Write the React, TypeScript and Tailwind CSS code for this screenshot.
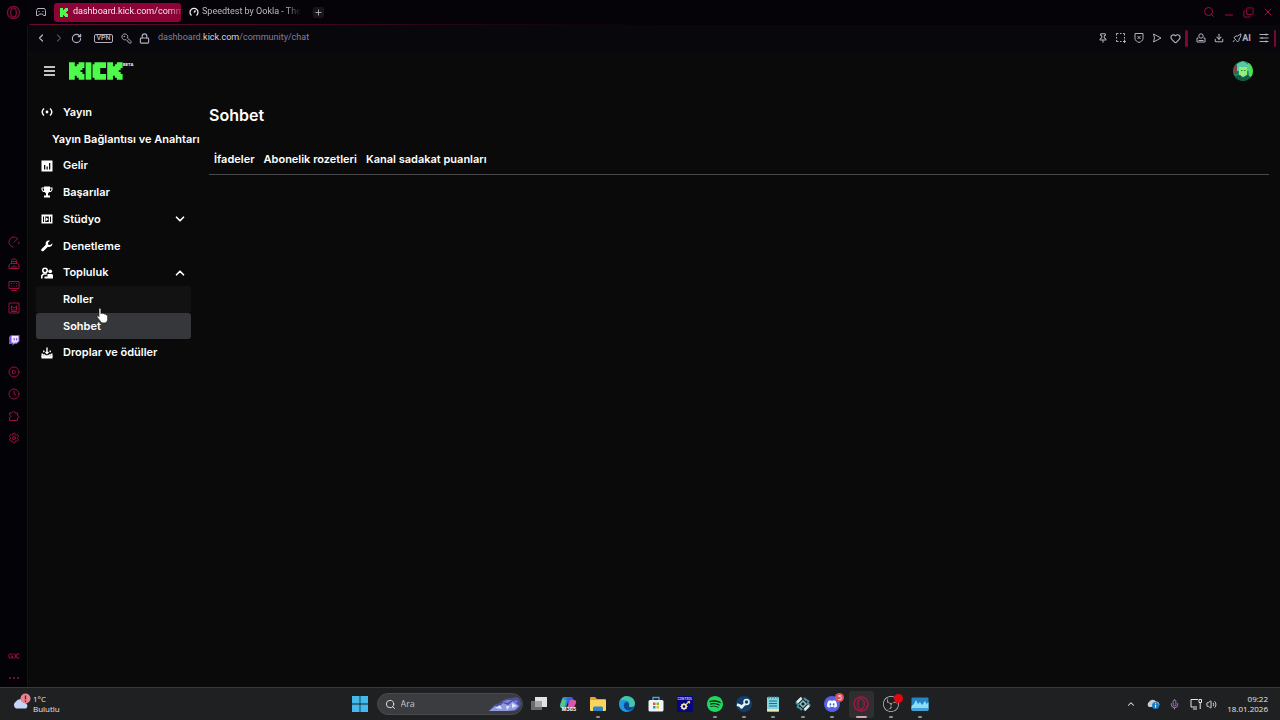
import React from "react";
import {
  ChevronDown,
  ChevronLeft,
  ChevronRight,
  ChevronUp,
  CirclePlay,
  Clock,
  Copy,
  Download,
  Heart,
  KeyRound,
  Lock,
  Mic,
  Minus,
  Pin,
  Plus,
  RotateCw,
  Search,
  Settings,
  Volume2,
  X,
} from "lucide-react";
import { SiDiscord, SiObsstudio, SiSpotify } from "react-icons/si";

interface NavItem {
  label: string;
  icon?: React.ReactNode;
  arrow?: "up" | "down";
  className?: string;
}

const K_SHAPE = "h3v2h1v-1h1v-1h3v3h-1v1h-1v1h1v1h1v3h-3v-1h-1v-1h-1v2h-3z";

function KickMark() {
  return (
    <svg viewBox="0 0 8 9" className="h-[9px] w-2 shrink-0 fill-[#4dfb4a]">
      <path d={"M0 0" + K_SHAPE} />
    </svg>
  );
}

function KickLogo() {
  return (
    <svg viewBox="0 0 28 9" className="h-[18px] w-[54px] fill-[#4dfb4a]">
      <path d={"M0 0" + K_SHAPE} />
      <rect x="8.6" width="3" height="9" />
      <path d="M13.200 0h6v3h-3v3h3v3h-6v-1h-1v-7h1z" />
      <path d={"M19.800 0" + K_SHAPE} />
    </svg>
  );
}

function LiveIcon() {
  return (
    <svg viewBox="0 0 12 12" className="size-3" fill="none" stroke="currentColor" strokeWidth="1.5">
      <path d="M3 2.5C.6 4.5.6 7.5 3 9.5M9 2.5c2.4 2 2.4 5 0 7" />
      <circle cx="6" cy="6" r="1.4" fill="currentColor" stroke="none" />
    </svg>
  );
}

function IncomeIcon() {
  return (
    <svg viewBox="0 0 12 12" className="size-3">
      <path
        fill="currentColor"
        fillRule="evenodd"
        d="M.5.5h11v11H.5zM3 5v4.5h1.300V5zM5.500 6.500v3h1.300v-3zM8 3v6.500h1.300V3z"
      />
    </svg>
  );
}

function TrophyIcon() {
  return (
    <svg viewBox="0 0 12 12" className="size-3 fill-current">
      <path
        fillRule="evenodd"
        d="M3 .5h6v1h2.500v2.500L10 6H8.500L7 7.300V9.500h2v2H3v-2h2V7.300L3.500 6H2L.5 4V1.500H3zM1.600 2.500v1.200l.9 1.200H3V2.500zM9 2.500v2.400h.5l.9-1.200V2.500z"
      />
    </svg>
  );
}

function StudioIcon() {
  return (
    <svg viewBox="0 0 12 12" className="size-3 fill-current">
      <path fillRule="evenodd" d="M.5 1.500h11v9H.5zM2 3.500V9h1V3.500zM9 3.500V9h1V3.500zM4.200 3.500V9h3.600V3.500z" />
      <path d="M4.700 4.200 7.500 6.200 4.700 8.300z" />
    </svg>
  );
}

function WrenchIcon() {
  return (
    <svg viewBox="0 0 12 12" className="size-3 fill-current">
      <path d="M11.300 3.200 9.300 5 7.200 4.700 7 2.700 8.900.8C7.300.2 5.600.8 4.900 2.200c-.4.9-.4 1.700-.1 2.500L.6 8.900c-.6.6-.6 1.500 0 2 .6.6 1.500.6 2 0L6.900 6.700c1 .4 2.200.3 3.100-.4 1.100-.7 1.600-2 1.300-3.100z" />
    </svg>
  );
}

function CommunityIcon() {
  return (
    <svg viewBox="0 0 12 12" className="size-3">
      <circle cx="4" cy="3.500" r="2.200" fill="none" stroke="currentColor" strokeWidth="1.600" />
      <path d="M.8 11.500V8.800L2.500 7h3.200" fill="none" stroke="currentColor" strokeWidth="1.600" />
      <circle cx="9.200" cy="4.300" r="1.900" fill="currentColor" />
      <path d="M6.500 7H11l1 1v3.500H6.500zM3.500 9.500h3v2h-3z" fill="currentColor" />
    </svg>
  );
}

function DropsIcon() {
  return (
    <svg viewBox="0 0 12 12" className="size-3" fill="none" stroke="currentColor">
      <path strokeWidth="2.400" d="M.5 10.300h11" />
      <path strokeWidth="1.400" d="M1.200 6.500V10M10.800 6.500V10M6 .5v5.500M1 8h2.500l1 1h3l1-1H11M2.800 3.500v1.700M9.200 3.500v1.700M4.500 5 6 6.500 7.500 5" />
    </svg>
  );
}

function NavRow({ label, icon, arrow, className = "pl-[5px]" }: NavItem) {
  return (
    <a
      href="#"
      className={
        "flex items-center rounded-[3px] pr-1 text-[11px] font-semibold whitespace-nowrap text-white " + className
      }
    >
      {icon && <span className="mr-[10px] w-3 shrink-0">{icon}</span>}
      <span>{label}</span>
      {arrow === "down" && <ChevronDown className="ml-auto size-[14px]" strokeWidth={3} />}
      {arrow === "up" && <ChevronUp className="ml-auto size-[14px]" strokeWidth={3} />}
    </a>
  );
}

const navItems: NavItem[] = [
  { label: "Yayın", icon: <LiveIcon /> },
  { label: "Yayın Bağlantısı ve Anahtarı", className: "pl-4" },
  { label: "Gelir", icon: <IncomeIcon /> },
  { label: "Başarılar", icon: <TrophyIcon /> },
  { label: "Stüdyo", icon: <StudioIcon />, arrow: "down" },
  { label: "Denetleme", icon: <WrenchIcon /> },
  { label: "Topluluk", icon: <CommunityIcon />, arrow: "up" },
  { label: "Roller", className: "pl-[27px] bg-[#121213]" },
  { label: "Sohbet", className: "pl-[27px] bg-[#36373a]" },
  { label: "Droplar ve ödüller", icon: <DropsIcon /> },
];

function HandCursor() {
  return (
    <svg viewBox="0 0 12 16" className="pointer-events-none absolute left-[68px] top-[217px] h-4 w-3">
      <path
        d="M3 1.200c0-1.300 1.900-1.300 1.900 0v4.500l.3-.1c.3-.8 1.500-.7 1.700.2.500-.6 1.500-.4 1.600.4.600-.4 1.600-.1 1.600.9 1-.2 1.500.4 1.500 1.200v3.200c0 2.300-1.400 3.500-3.600 3.500-2.300 0-3.200-.8-4.200-2.500L1.200 9.200c-.6-1 .6-1.900 1.300-1.100l.5.600z"
        fill="#fff"
        stroke="#111"
        strokeWidth=".6"
      />
    </svg>
  );
}

function RailButton({ label, children }: { label: string; children: React.ReactNode }) {
  return (
    <button aria-label={label} className="flex size-3 items-center justify-center">
      {children}
    </button>
  );
}

function SideRail() {
  return (
    <div className="flex w-[27px] shrink-0 flex-col items-center justify-between bg-[#030206] text-[#9c103b]">
      <div className="h-[30px] pt-[5px]">
        <button aria-label="Opera" className="block">
          <svg viewBox="0 0 16 16" className="size-[15px]" fill="none" stroke="#7d0c30">
            <circle cx="8" cy="8" r="6.500" strokeWidth="1.500" />
            <ellipse cx="8" cy="8" rx="3" ry="4.800" strokeWidth="1.500" />
          </svg>
        </button>
      </div>
      <div className="flex flex-col gap-[10px]">
        <RailButton label="GX Control">
          <svg viewBox="0 0 12 12" className="size-3" fill="none" stroke="currentColor">
            <path d="M5.500 11A5 5 0 1 1 9.500 2.500M11 5.500A5 5 0 0 1 10.500 8.200M5.500 6.500 10 2.500" />
          </svg>
        </RailButton>
        <RailButton label="GX Cleaner">
          <svg viewBox="0 0 12 12" className="size-3" fill="none" stroke="currentColor">
            <path d="M3.500 5.500v-3l1-1.500h3l1 1.500v3M1 10.500V7l1.500-1.500h7L11 7v3.500zM4 10V8M6 10V7M8 10V8M4 3.500h4" />
          </svg>
        </RailButton>
        <RailButton label="GX Mods">
          <svg viewBox="0 0 12 12" className="size-3" fill="none" stroke="currentColor">
            <path d="M1 1.500h10v7H1zM3 10.500h6M3 3.500h1M5.500 3.500h1M8 3.500h1M3 6h1M5.500 6h1M8 6h1" />
          </svg>
        </RailButton>
        <RailButton label="GX Corner">
          <svg viewBox="0 0 12 12" className="size-3" fill="none" stroke="currentColor">
            <path d="M1 1h10v10H1zM3.500 8V4L6 6l2.500-2v4zM3 9.500h6" />
          </svg>
        </RailButton>
        <div className="my-[10px]">
          <RailButton label="Twitch">
            <svg viewBox="0 0 12 12" className="size-3">
              <path d="M1 3 3 1h8.500v6.500L8.500 10H6.500l-2 2v-2H1z" fill="#7a50d8" />
              <path d="M3.500 2h7v5L9 8.500H7L5.500 10V8.500h-2z" fill="#efe9ff" />
              <path d="M6.200 4v2.500M8.700 4v2.500" stroke="#6b45c6" />
            </svg>
          </RailButton>
        </div>
        <RailButton label="Player">
          <CirclePlay className="size-3" />
        </RailButton>
        <RailButton label="Geçmiş">
          <Clock className="size-3" />
        </RailButton>
        <RailButton label="Uzantılar">
          <svg viewBox="0 0 12 12" className="size-3" fill="none" stroke="currentColor">
            <path d="M1.500 10.500V7.500C3.500 7.500 3.500 5 1.500 5V3h2.500C4 .8 7 .8 7 3h2.500v2.500C11.500 5.500 11.500 8 9.500 8v2.500z" />
          </svg>
        </RailButton>
        <RailButton label="Ayarlar">
          <Settings className="size-3" />
        </RailButton>
      </div>
      <div className="flex flex-col items-center gap-[10px] pb-[3px]">
        <RailButton label="GX">
          <svg viewBox="0 0 12 12" className="size-3" fill="none" stroke="currentColor">
            <path d="M4.500 4h-3L1 4.500v3l.5.500h3V6H3M5.500 4h1.500L9 8h2.500M5.500 8H7l2-4h2.500" />
          </svg>
        </RailButton>
        <RailButton label="Daha fazla">
          <svg viewBox="0 0 12 12" className="size-3 fill-current">
            <circle cx="2" cy="6" r="1" />
            <circle cx="6" cy="6" r="1" />
            <circle cx="10" cy="6" r="1" />
          </svg>
        </RailButton>
      </div>
    </div>
  );
}

function TabStrip() {
  return (
    <div className="flex h-6 items-center bg-[#050308] pl-2 font-[Roboto,sans-serif] text-[9px]">
      <button aria-label="Çalışma alanı" className="text-[#b5b1bf]">
        <svg viewBox="0 0 12 12" className="size-3" fill="none" stroke="currentColor">
          <path d="M1.500 9.500v-5l1-2h7l1 2v5h-2l-1-1.500h-3l-1 1.500zM3.500 5.500h1M7.500 5.500h1" />
        </svg>
      </button>
      <div className="ml-[7px] flex h-[19px] w-[127px] items-center rounded-[3px] bg-[#8c0338] pl-[6px] text-[#f6e6ec]">
        <KickMark />
        <span className="ml-[5px] whitespace-nowrap mask-r-from-85%">dashboard.kick.com/comm</span>
      </div>
      <div className="ml-2 flex h-[19px] w-[116px] items-center text-[#bdb9c5]">
        <svg viewBox="0 0 10 10" className="size-[10px] shrink-0" fill="none" stroke="#e8e8ee" strokeWidth="1.300">
          <path d="M2.500 8.500A4 4 0 1 1 7.500 8.500M5 5.500l1.500-2" />
        </svg>
        <span className="ml-[3px] whitespace-nowrap mask-r-from-85%">Speedtest by Ookla - The</span>
      </div>
      <button aria-label="Yeni sekme" className="ml-2 rounded-[2px] bg-[#17151c] p-px text-[#c9c6d2]">
        <Plus className="size-[9px]" />
      </button>
      <div className="ml-auto flex items-center gap-2 pr-[6px] text-[#a20f3d]">
        <button aria-label="Sekmelerde ara">
          <Search className="size-3" />
        </button>
        <button aria-label="Küçült">
          <Minus className="mt-[6px] size-3" />
        </button>
        <button aria-label="Geri yükle">
          <Copy className="size-[11px] -scale-y-100" />
        </button>
        <button aria-label="Kapat">
          <X className="size-3" />
        </button>
      </div>
    </div>
  );
}

function AddressBar() {
  return (
    <div className="flex h-[26px] items-center bg-[#08070c] pl-[7px] font-[Roboto,sans-serif] text-[#b3afbe]">
      <button aria-label="Geri">
        <ChevronLeft className="size-3" strokeWidth={2.5} />
      </button>
      <button aria-label="İleri" className="ml-[6px] text-[#4b4854]">
        <ChevronRight className="size-3" strokeWidth={2.5} />
      </button>
      <button aria-label="Yenile" className="ml-[6px]">
        <RotateCw className="size-[11px]" strokeWidth={2.5} />
      </button>
      <button className="ml-3 h-[9px] w-[19px] rounded-[2px] border border-current text-center text-[7px] leading-[7px] font-semibold">
        VPN
      </button>
      <button aria-label="Site ayarları" className="ml-2">
        <KeyRound className="size-[11px] -scale-x-100" />
      </button>
      <button aria-label="Güvenli bağlantı" className="ml-[7px]">
        <Lock className="size-[11px]" strokeWidth={2.5} />
      </button>
      <a href="#" className="ml-2 text-[9px] text-[#8480a0]">
        dashboard.<span className="text-[#d6d3e0]">kick.com</span>/community/chat
      </a>
      <div className="ml-auto flex items-center gap-2">
        <button aria-label="Sabitle">
          <Pin className="size-[10px]" strokeWidth={2.5} />
        </button>
        <button aria-label="Ekran görüntüsü">
          <svg viewBox="0 0 10 10" className="size-[10px]" fill="none" stroke="currentColor">
            <path d="M.5 2.500v-2h2M4 .5h1.500M7 .5h1.500v2M8.500 4v1.500M.5 4v1.500M.5 7v1.500h2M4 8.500h1.500M8.500 6.500V10M7 8.500h3" />
          </svg>
        </button>
        <button aria-label="Reklam engelleyici">
          <svg viewBox="0 0 10 10" className="size-[10px]" fill="none" stroke="currentColor">
            <path d="M1 .5h8v5c0 2-2 3.200-4 4-2-.8-4-2-4-4zM3.500 3l3 3M6.500 3l-3 3" />
          </svg>
        </button>
        <button aria-label="Gönder">
          <svg viewBox="0 0 10 10" className="size-[10px]" fill="none" stroke="currentColor">
            <path d="M1.500 1 9 5 1.500 9l1-4z" />
          </svg>
        </button>
        <button aria-label="Favoriler">
          <Heart className="size-[11px]" strokeWidth={2.5} />
        </button>
      </div>
      <div className="ml-1 h-[17px] w-[3px] rounded-full bg-[#7a0832]" />
      <div className="ml-2 flex items-center gap-2">
        <button aria-label="Profil">
          <svg viewBox="0 0 10 10" className="size-[10px]" fill="none" stroke="currentColor">
            <circle cx="5" cy="3" r="2.200" />
            <path d="M2.500 5H1v4h8V5H7.500M2.500 7.500h5" />
          </svg>
        </button>
        <button aria-label="İndirilenler">
          <Download className="size-[10px]" strokeWidth={2.5} />
        </button>
        <button className="flex items-center text-[9px] leading-none font-bold">
          <svg viewBox="0 0 10 10" className="size-[10px]" fill="none" stroke="currentColor">
            <path d="M3 6 2 4.500 4 3h1.500L9 .8 8.500 4 7 6v1.500L5.500 9 4.500 7.500zM2.500 7 1 9" />
          </svg>
          AI
        </button>
        <button aria-label="Kolay kurulum">
          <svg viewBox="0 0 10 10" className="size-[10px]" fill="none" stroke="currentColor">
            <path d="M.5 1.500h9M.5 5h9M.5 8.500h9M7 .5v2M3 4v2M7 7.500v2" />
          </svg>
        </button>
      </div>
      <div className="ml-[5px] mr-1 h-[17px] w-[2px] rounded-full bg-[#7a0832]" />
    </div>
  );
}

function Avatar() {
  return (
    <svg viewBox="0 0 20 20" className="size-5">
      <clipPath id="avatar">
        <circle cx="10" cy="10" r="10" />
      </clipPath>
      <g clipPath="url(#avatar)">
        <rect width="20" height="20" fill="#1f8a5c" />
        <path d="M0 4h5v9H0z" fill="#6d4a45" />
        <path d="M15 2h5v14h-4z" fill="#4fe04b" />
        <path d="M4 3l6-3 6 4v6H4z" fill="#58c9a0" />
        <path d="M6 6h8v8l-4 2-4-2z" fill="#8ef07a" />
        <path d="M8 9h1.500v1H8zM11 9h1.500v1H11z" fill="#1e7a49" />
        <path d="M2 15l5-1 3 3 4-3 4 2v4H2z" fill="#15584c" />
      </g>
    </svg>
  );
}

function KickPage() {
  return (
    <div className="flex flex-1 flex-col bg-[#0a0a0a] font-[Inter,sans-serif] text-white">
      <header className="flex h-10 items-center pl-4 pr-[27px]">
        <button aria-label="Menü">
          <svg viewBox="0 0 11 10" className="h-[10px] w-[11px]" stroke="#fff" strokeWidth="1.300">
            <path d="M0 1h11M0 5h11M0 9h11" />
          </svg>
        </button>
        <a href="#" aria-label="Kick" className="ml-[14px] flex items-start">
          <KickLogo />
          <span className="text-[4px] leading-[5px] font-bold">BETA</span>
        </a>
        <button aria-label="Hesap" className="ml-auto">
          <Avatar />
        </button>
      </header>
      <div className="relative flex flex-1">
        <nav className="w-[163px] shrink-0 pt-2 pl-2">
          <div className="grid h-[267px] auto-rows-fr grid-cols-1">
            {navItems.map((item) => (
              <NavRow key={item.label} {...item} />
            ))}
          </div>
        </nav>
        <main className="ml-[18px] flex-1 pt-3 pr-[11px]">
          <h1 className="text-base leading-6 font-semibold">Sohbet</h1>
          <div className="mt-[17px] flex h-[31px] items-center gap-[9px] border-b border-[#48484a] px-[5px] text-[11px] font-semibold">
            <button>İfadeler</button>
            <button>Abonelik rozetleri</button>
            <button>Kanal sadakat puanları</button>
          </div>
        </main>
        <HandCursor />
      </div>
    </div>
  );
}

interface TaskProps {
  label: string;
  running?: boolean;
  active?: boolean;
  children: React.ReactNode;
}

function Task({ label, running, active, children }: TaskProps) {
  return (
    <button
      aria-label={label}
      className={
        "relative flex h-[27px] w-[25px] items-center justify-center rounded-[3px] " + (active ? "bg-[#2f2e31]" : "")
      }
    >
      {children}
      {running && !active && <span className="absolute bottom-0 h-[2px] w-1 rounded-full bg-[#8f8f8f]" />}
      {active && <span className="absolute bottom-0 h-[2px] w-[11px] rounded-full bg-[#d9a3b4]" />}
    </button>
  );
}

function TaskApps() {
  return (
    <div className="flex w-[406px] justify-between">
      <Task label="Görev görünümü">
        <svg viewBox="0 0 18 16" className="h-4 w-[18px]">
          <rect x="1" y="5" width="11" height="9" fill="#6c6c6c" />
          <rect x="5" y="1" width="12" height="10" fill="#e2e2e2" />
          <rect x="5" y="5" width="7" height="6" fill="#a5a5a5" />
        </svg>
      </Task>
      <Task label="Microsoft 365 Copilot">
        <svg viewBox="0 0 18 18" className="size-[18px]">
          <path d="M5 2h5L7 13H3C1 13 .5 11 1 9.500L3 4c.4-1.200 1-2 2-2z" fill="#2f8be0" />
          <path d="M2 8l1.500-4.500L7 6 5 13H3c-2 0-2-2-1-5z" fill="#5bc77a" />
          <path d="M8 2h4c1.500 0 2 1 2.300 2l.7 2h-4L9 10z" fill="#3b62d8" />
          <path d="M11 5h4c2 0 2.500 1.500 2 3l-1.500 3.500C15 12.500 14 13 13 13H8z" fill="#d957a8" />
          <text x="10" y="16" textAnchor="middle" fontSize="5" fontWeight="700" fill="#fff" fontFamily="Inter">
            M365
          </text>
        </svg>
      </Task>
      <Task label="Dosya Gezgini" running>
        <svg viewBox="0 0 18 16" className="h-4 w-[18px]">
          <path d="M1 2q0-1 1-1h4l2 2h8q1 0 1 1v2H1z" fill="#e0a52c" />
          <rect x="1" y="4" width="16" height="11" rx="1" fill="#fbd35f" />
          <path d="M4 15v-3q0-1.500 1.500-1.500h7q1.500 0 1.500 1.500v3z" fill="#2c87c9" />
        </svg>
      </Task>
      <Task label="Microsoft Edge">
        <svg viewBox="0 0 16 16" className="size-4">
          <circle cx="8" cy="8" r="8" fill="#1777cf" />
          <path d="M.3 6A8 8 0 0 1 16 7.500C16 10 14 11 12 11c-1.500 0-2.500-.6-2-1.500C11 7 9.500 5 6.500 4.800 3.500 4.500 1 5 .3 6z" fill="#41c9a2" />
          <path d="M.3 6C2 3.500 6 3.500 8 5.500c-3 .5-4 3-3 5.500 1 3 3 4 5 4.500C5 17-1 13 .3 6z" fill="#1e9ae0" />
          <path d="M5 11c-.5-3 1-4.500 2.500-5 2 .5 3 2 2.500 3.500-.5 1 .5 2.500 5 1.500-1 2-4 3.500-6 3-2 0-3.500-1.500-4-3z" fill="#11478f" />
        </svg>
      </Task>
      <Task label="Microsoft Store">
        <svg viewBox="0 0 16 16" className="size-4">
          <path d="M5 5V1.500h6V5" fill="none" stroke="#3ba8e8" strokeWidth="1.300" />
          <rect x=".5" y="4" width="15" height="11.500" rx="1.500" fill="#eef3f6" />
          <path d="M5 6.500h2.500V9H5z" fill="#e8532f" />
          <path d="M8.500 6.500H11V9H8.500z" fill="#79b82c" />
          <path d="M5 10h2.500v2.500H5z" fill="#2596d8" />
          <path d="M8.500 10H11v2.500H8.500z" fill="#f5b522" />
        </svg>
      </Task>
      <Task label="Control">
        <svg viewBox="0 0 16 16" className="size-4">
          <rect width="16" height="16" fill="#06067e" />
          <text x="8" y="4" textAnchor="middle" fontSize="3" fontWeight="700" fill="#c6c7ef" fontFamily="Inter">
            CONTROL
          </text>
          <circle cx="7" cy="10.500" r="2.200" fill="none" stroke="#f1e9c8" strokeWidth="1.600" />
          <path d="M7 6.800v7.400M3.300 10.500h7.400M4.400 7.900l5.200 5.200M4.400 13.100l5.200-5.200" stroke="#f1e9c8" strokeWidth=".9" />
          <circle cx="7" cy="10.500" r="1.200" fill="#06067e" />
          <path d="M9 8.500 12.500 5M10.500 5.500h2v2" fill="none" stroke="#f6cf50" strokeWidth="1.200" />
        </svg>
      </Task>
      <Task label="Spotify" running>
        <SiSpotify className="size-4 text-[#1ed760]" />
      </Task>
      <Task label="Steam" running>
        <svg viewBox="0 0 16 16" className="size-4">
          <circle cx="8" cy="8" r="8" fill="#123f69" />
          <path d="M1 8.500 6 10.500 9 8" fill="none" stroke="#eef5fa" strokeWidth="2.500" />
          <circle cx="10.500" cy="6" r="2.500" fill="none" stroke="#eef5fa" strokeWidth="1.500" />
          <circle cx="5.500" cy="11" r="1.800" fill="#eef5fa" />
        </svg>
      </Task>
      <Task label="Not Defteri" running>
        <svg viewBox="0 0 14 16" className="h-4 w-[14px]">
          <rect x="1" y="1" width="12" height="14.500" rx="1" fill="#7fd3e3" />
          <path d="M1 13h12v2.500H1z" fill="#e9e3b1" />
          <path d="M3 5h8M3 7.500h8M3 10h8" stroke="#1b7184" />
          <path d="M3 0v2.500M5.700 0v2.500M8.300 0v2.500M11 0v2.500" stroke="#2f6d7c" />
        </svg>
      </Task>
      <Task label="Oyun aracı" running>
        <svg viewBox="0 0 16 16" className="size-4" fill="none">
          <path d="M7 1.500 1.500 7 4 9.500" stroke="#3f8e9b" strokeWidth="2" />
          <path d="M9 14.500 14.500 9 12 6.500" stroke="#3f8e9b" strokeWidth="2" />
          <path d="M2 6.500 6.500 2M9.500 14 14 9.500" stroke="#dcebee" strokeWidth="2.500" />
          <path d="M9 2 11.500 4.500M4.500 11.500 7 14M12 4l2 2M2 10l2 2" stroke="#4b9aa6" strokeWidth="2" />
          <path d="m8 5 3 3-3 3-3-3z" stroke="#8bc4cd" strokeWidth="1.500" />
        </svg>
      </Task>
      <Task label="Discord" running>
        <span className="flex size-4 items-center justify-center rounded-full bg-[#5462e8]">
          <SiDiscord className="size-[10px] text-white" />
        </span>
        <span className="absolute top-[2px] right-0 flex size-[9px] items-center justify-center rounded-full bg-[#d9525c] text-[7px] leading-none text-white">
          5
        </span>
      </Task>
      <Task label="Opera GX" active>
        <svg viewBox="0 0 16 16" className="size-4" fill="none" stroke="#a5153f">
          <circle cx="8" cy="8" r="7" strokeWidth="1.600" />
          <ellipse cx="8" cy="8" rx="3.300" ry="5.200" strokeWidth="1.400" />
        </svg>
      </Task>
      <Task label="OBS Studio" running>
        <SiObsstudio className="size-4 text-[#c2c2c2]" />
        <span className="absolute top-[3px] right-0 size-[9px] rounded-full bg-[#e30613]" />
      </Task>
      <Task label="Görev Yöneticisi" running>
        <svg viewBox="0 0 18 14" className="h-[14px] w-[18px]">
          <rect x=".5" y=".5" width="17" height="13" rx="1" fill="#2385c6" />
          <path d="M.5 9 3 7l2-4 2 4 2-2 2 3 3-4 1.500 3 2-2v5.500q0 2-1 3h-15q-1-1-1-2z" fill="#8fdcf7" />
          <path d="M.5 11h17v2.500H.5z" fill="#3ba2dc" />
        </svg>
      </Task>
    </div>
  );
}

function Taskbar() {
  return (
    <footer className="grid h-[33px] grid-cols-[1fr_auto_1fr] items-center border-t border-[#3a3a3b] bg-[#1f2021] font-['Open_Sans','Noto_Sans',sans-serif] text-[8px] leading-[10px] text-[#e6e6e6]">
      <button className="flex items-center gap-px pl-[11px] text-left">
        <svg viewBox="0 0 21 18" className="mb-1 h-[18px] w-[21px]">
          <path d="M5 15.500a4 4 0 0 1 0-7 5 5 0 0 1 9 1.500 3 3 0 0 1 1 5.500z" fill="#c3d6f7" />
          <circle cx="14.500" cy="5.500" r="5" fill="#ec8391" />
          <path d="M14.500 2.500v4M14.500 7.500V9" stroke="#6c1d28" strokeWidth="1.300" />
        </svg>
        <span>
          1°C
          <br />
          Bulutlu
        </span>
      </button>
      <div className="flex items-center">
        <button aria-label="Başlat" className="flex w-[25px] justify-center">
          <svg viewBox="0 0 16 16" className="size-4 fill-[#43b9ee]">
            <path d="M0 0h7.600v7.600H0zM8.400 0H16v7.600H8.400zM0 8.400h7.600V16H0zM8.400 8.400H16V16H8.400z" />
          </svg>
        </button>
        <label className="mx-1 flex h-[22px] w-[146px] items-center rounded-full border border-[#4a4a4c] bg-[#3b3c3f] pl-[7px]">
          <Search className="size-[11px] shrink-0" />
          <input
            aria-label="Ara"
            placeholder="Ara"
            className="ml-[5px] w-0 flex-1 bg-transparent text-[9px] outline-none placeholder:text-[#c4c4c4]"
          />
          <svg viewBox="0 0 34 18" className="h-[18px] w-[34px] shrink-0">
            <path d="M1 16 6 10l5-2 6-4 12-2q4 3 4 7-1 5-6 7z" fill="#4c4f9c" />
            <path d="M1 16 7 11l4 1 4-4 5 2 5-4 6 5-4 4-8 1z" fill="#8f9bdd" />
            <path d="M7 13l5-3 2 4zM18 11l4 0-3 4zM24 8l5 3-5 2z" fill="#dfe4ff" />
            <path d="M14 7l5-2 5 0-4 3zM26 5l4 1-2 2z" fill="#7f83d8" />
          </svg>
        </label>
        <TaskApps />
      </div>
      <div className="flex items-center justify-end pr-3">
        <button aria-label="Gizli simgeler">
          <ChevronUp className="size-[10px]" strokeWidth={2.5} />
        </button>
        <button aria-label="OneDrive" className="ml-[10px]">
          <svg viewBox="0 0 14 12" className="h-3 w-[14px]">
            <path d="M3 9a3 3 0 0 1 0-5 4 4 0 0 1 7-.5 3 3 0 0 1 2 5.500z" fill="#c9ccd0" />
            <circle cx="9.500" cy="7.500" r="3.500" fill="#1d7fc4" />
            <path d="M9.500 7v2.500M9.500 5.300v1" stroke="#fff" />
          </svg>
        </button>
        <button aria-label="Mikrofon" className="ml-[9px] text-[#b27fc9]">
          <Mic className="size-[11px]" />
        </button>
        <button aria-label="Ağ" className="ml-[10px]">
          <svg viewBox="0 0 12 12" className="size-3" fill="none" stroke="currentColor">
            <path d="M8 1.500H1v7.500h6M3 11h4M9 1.500h2.500v3H9zM10.200 4.500V11" />
          </svg>
        </button>
        <button aria-label="Ses" className="ml-1">
          <Volume2 className="size-[11px]" />
        </button>
        <time className="ml-[10px] text-right">
          09:22
          <br />
          18.01.2026
        </time>
      </div>
    </footer>
  );
}

export default function App() {
  return (
    <div className="flex min-h-screen flex-col bg-[#0a0a0a]">
      <div className="flex flex-1">
        <SideRail />
        <div className="flex min-w-0 flex-1 flex-col bg-[#050308]">
          <TabStrip />
          <div className="flex flex-1 flex-col overflow-hidden rounded-tl-[4px] border-l border-[#2b0716]">
            <div className="h-px bg-linear-to-r from-[#6b0a2e] to-transparent to-50%" />
            <AddressBar />
            <KickPage />
          </div>
        </div>
      </div>
      <Taskbar />
    </div>
  );
}
